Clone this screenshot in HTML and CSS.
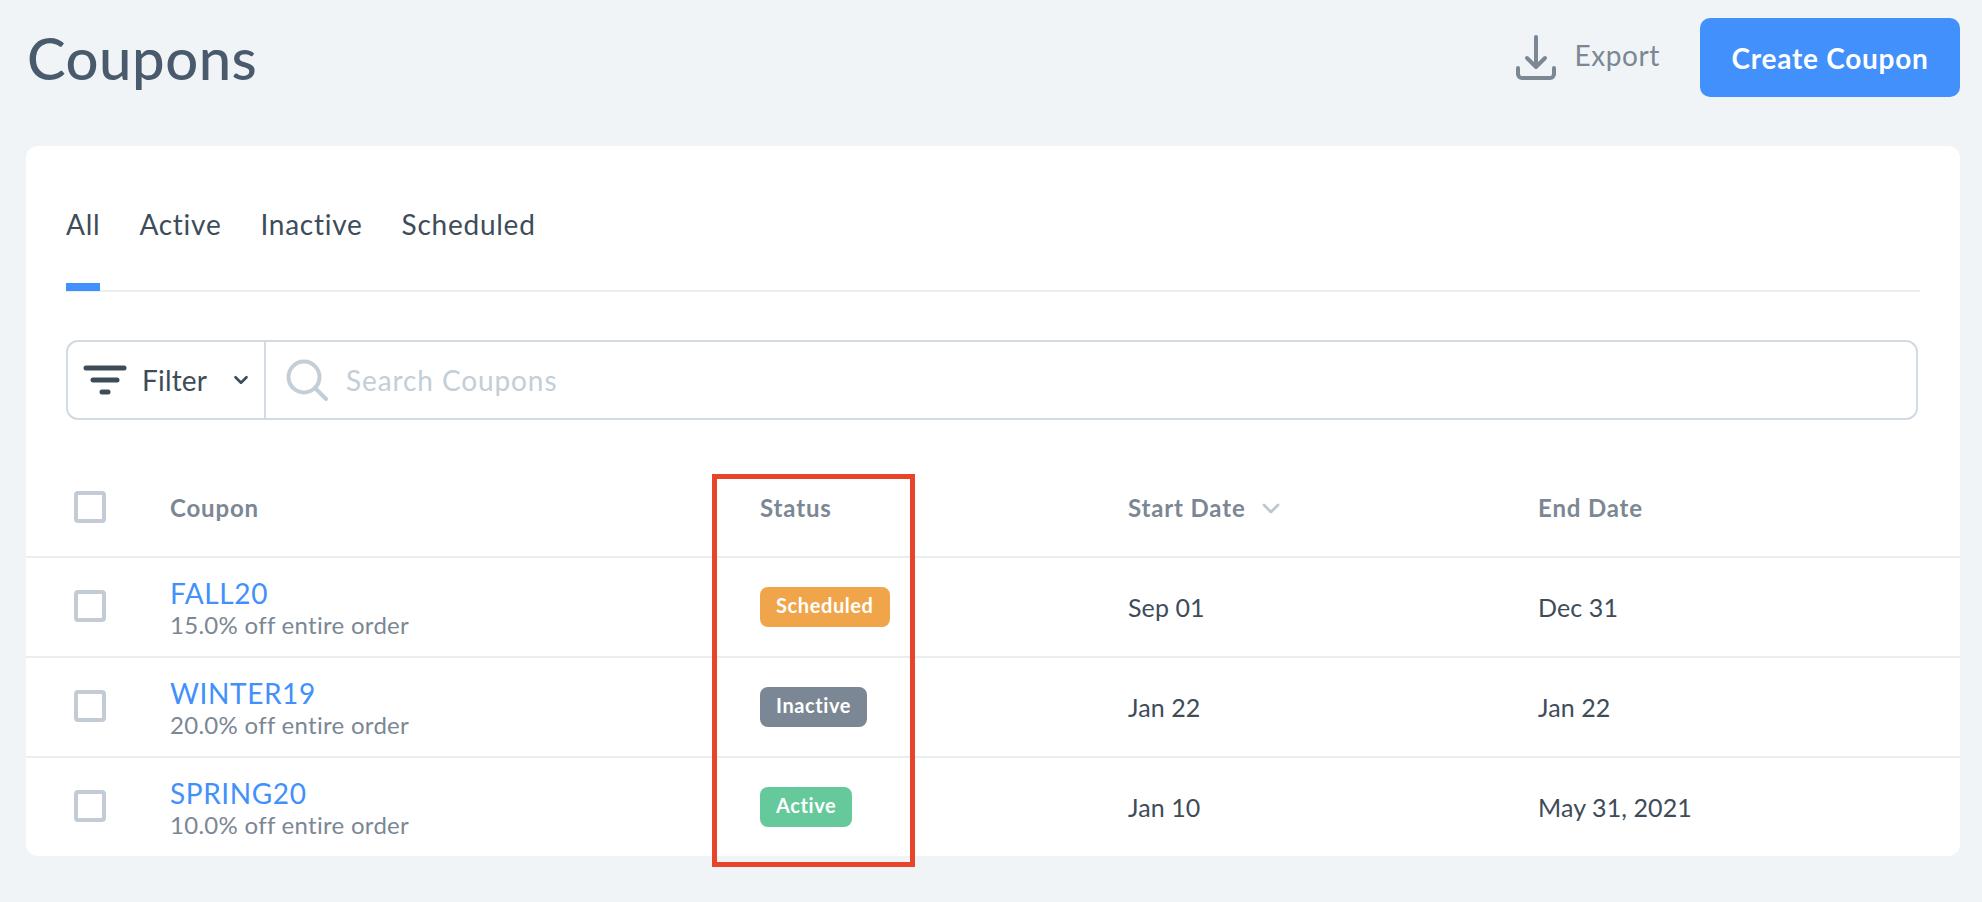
FILE: index.html
```html
<!DOCTYPE html>
<html lang="en">
<head>
<meta charset="utf-8">
<title>Coupons</title>
<link rel="stylesheet" href="styles.css">
</head>
<body>
<div class="page">
  <header class="top">
    <h1 class="title">Coupons</h1>
    <div class="actions">
      <a class="export">
        <svg class="export-icon" viewBox="0 0 40 46" fill="none" stroke="#7b8794" stroke-width="4" stroke-linecap="round" stroke-linejoin="round"><path d="M20 2V30"/><path d="M11 23l9 9 9-9"/><path d="M2 33v6a4 4 0 0 0 4 4h28a4 4 0 0 0 4-4v-6"/></svg>
        <span class="export-label">Export</span>
      </a>
      <button class="create">Create Coupon</button>
    </div>
  </header>
  <main class="card">
    <nav class="tabs">
      <a class="tab is-current">All</a>
      <a class="tab">Active</a>
      <a class="tab">Inactive</a>
      <a class="tab">Scheduled</a>
    </nav>
    <div class="search">
      <div class="filter">
        <svg class="filter-icon" viewBox="0 0 44 30" fill="none" stroke="#3e4c59" stroke-linecap="round" stroke-width="5"><path d="M3 3H41"/><path d="M10 15H34"/><path d="M19 27H25"/></svg>
        <span class="filter-label">Filter</span>
        <svg class="filter-chevron" viewBox="0 0 14 10" fill="none" stroke="#3e4c59" stroke-width="2.4" stroke-linecap="round" stroke-linejoin="round"><path d="M2 2l5 5 5-5"/></svg>
      </div>
      <div class="query">
        <svg class="search-icon" viewBox="0 0 42 42" fill="none" stroke="#c3ced6" stroke-width="4" stroke-linecap="round"><circle cx="18" cy="18" r="15.5"/><path d="M29.5 29.5L40 40"/></svg>
        <span class="placeholder">Search Coupons</span>
      </div>
    </div>
    <div class="table">
      <div class="row head">
        <span class="box"></span>
        <span class="head-first">Coupon</span>
        <span>Status</span>
        <span class="sorted">Start Date
          <svg class="sort-icon" viewBox="0 0 18 12" fill="none" stroke="#bcc7d0" stroke-width="2.8" stroke-linecap="round" stroke-linejoin="round"><path d="M2 2l7 7 7-7"/></svg>
        </span>
        <span>End Date</span>
      </div>
      <div class="row">
        <span class="box"></span>
        <div class="coupon"><a class="code">FALL20</a><span class="desc">15.0% off entire order</span></div>
        <div><span class="badge scheduled">Scheduled</span></div>
        <span>Sep 01</span>
        <span>Dec 31</span>
      </div>
      <div class="row">
        <span class="box"></span>
        <div class="coupon"><a class="code">WINTER19</a><span class="desc">20.0% off entire order</span></div>
        <div><span class="badge inactive">Inactive</span></div>
        <span>Jan 22</span>
        <span>Jan 22</span>
      </div>
      <div class="row">
        <span class="box"></span>
        <div class="coupon"><a class="code">SPRING20</a><span class="desc">10.0% off entire order</span></div>
        <div><span class="badge active">Active</span></div>
        <span>Jan 10</span>
        <span>May 31, 2021</span>
      </div>
    </div>
  </main>
  <div class="highlight"></div>
</div>
</body>
</html>
```
FILE: styles.css
```css
* { box-sizing: border-box; }
html, body { margin: 0; height: 100%; }
body {
  background: #f0f4f7;
  font-family: "Lato", "Noto Sans", sans-serif;
  color: #3e4c59;
  overflow: hidden;
}
.page { position: relative; width: 1982px; height: 902px; padding: 18px 22px 0 26px; }
.top { display: flex; justify-content: space-between; align-items: center; height: 79px; margin-bottom: 49px; }
.title { margin: 0 0 0 1px; font-size: 58px; font-weight: 500; line-height: 1; color: #4a5a6d; letter-spacing: 0.5px; }
.actions { display: flex; align-items: center; }
.export { display: flex; align-items: center; gap: 18px; font-size: 28px; color: #7b8794; margin-right: 40px; letter-spacing: 0.6px; }
.export-icon { width: 40px; height: 46px; display: block; }
.export-label { margin-bottom: 5px; }
.create { width: 260px; height: 79px; border: 0; border-radius: 10px; background: #4190fb; color: #fff; font: 700 28px "Lato", sans-serif; letter-spacing: 0.75px; }
.card { background: #fff; border-radius: 12px; height: 710px; }
.tabs { display: flex; gap: 39px; margin: 0 40px; height: 146px; border-bottom: 2px solid #e9eef2; padding-top: 60px; }
.tab { position: relative; font-size: 28px; height: 85px; line-height: 36px; letter-spacing: 0.75px; }
.tab.is-current::after { content: ""; position: absolute; left: 0; right: 0; bottom: 0; height: 8px; background: #4190fb; }
.search { display: flex; height: 80px; margin: 48px 42px 0 40px; border: 2px solid #d3dae2; border-radius: 12px; }
.filter { display: flex; align-items: center; width: 198px; border-right: 2px solid #d3dae2; padding-left: 15px; }
.filter-icon { width: 44px; height: 30px; display: block; }
.filter-label { font-size: 28px; margin-left: 15px; letter-spacing: 0.2px; }
.filter-chevron { width: 16px; height: 11px; margin-left: auto; margin-right: 15px; display: block; }
.query { display: flex; align-items: center; padding-left: 20px; gap: 18px; }
.search-icon { width: 42px; height: 42px; display: block; }
.placeholder { font-size: 28px; color: #c3ced6; letter-spacing: 0.9px; }
.table { margin-top: 36px; }
.row { display: grid; grid-template-columns: 145px 589px 368px 410px 1fr; align-items: center; height: 100px; border-top: 2px solid #e9eef2; font-size: 25px; letter-spacing: 0.1px; }
.row.head { padding-top: 3px; border-top: 0; font-size: 24px; font-weight: 700; color: #7b8794; letter-spacing: 0.85px; }
.head-first { margin-left: -1px; }
.box { display: block; width: 32px; height: 32px; margin: -2px 0 0 48px; border: 4px solid #c3ccd4; border-radius: 4px; }
.sorted { display: flex; align-items: center; gap: 14px; }
.sort-icon { width: 18px; height: 12px; display: block; margin: 3px 0 0 2px; }
.coupon { display: flex; flex-direction: column; margin-left: -1px; padding-top: 2px; }
.code { font-size: 28px; line-height: 34px; color: #4190fb; letter-spacing: 0.6px; }
.desc { font-size: 24px; line-height: 30px; color: #7b8794; letter-spacing: 0.29px; }
.badge { display: inline-block; height: 40px; line-height: 37px; padding: 0 16px; border-radius: 8px; color: #fff; font-size: 20px; font-weight: 700; letter-spacing: 0.6px; }
.scheduled { background: #f0a54a; }
.inactive { background: #7b8794; }
.active { background: #65c99b; }
.highlight { position: absolute; left: 712px; top: 474px; width: 203px; height: 393px; border: 5px solid #e8442a; pointer-events: none; }
```
